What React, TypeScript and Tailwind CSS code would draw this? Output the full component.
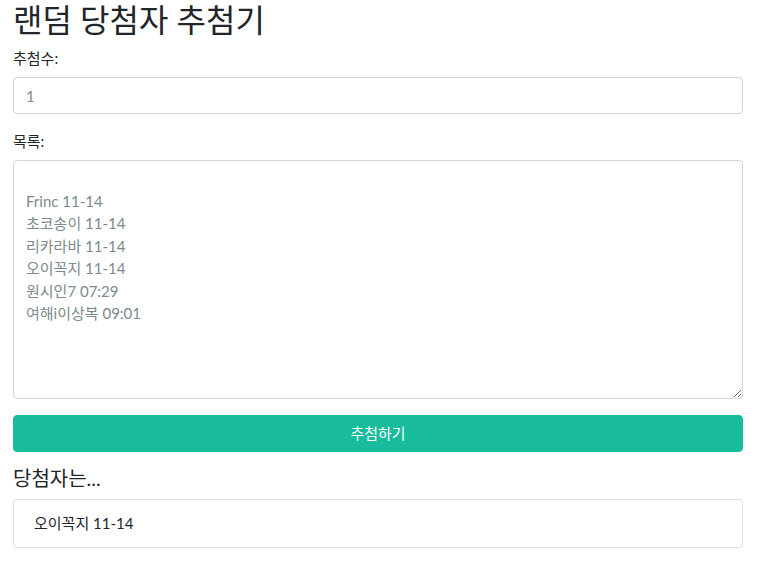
import { useState } from 'react';

const initialList = `
Frinc 11-14
초코송이 11-14
리카라바 11-14
오이꼭지 11-14
원시인7 07:29
여해i이상복 09:01`;

const font = 'font-[Lato,"Noto_Sans_CJK_KR",sans-serif]';

export default function App() {
  const [count, setCount] = useState('1');
  const [list, setList] = useState(initialList);
  const [winners, setWinners] = useState<string[]>(['오이꼭지 11-14']);

  const draw = () => {
    const names = list.split('\n').map((s) => s.trim()).filter(Boolean);
    const n = Math.max(1, parseInt(count) || 1);
    const shuffled = [...names].sort(() => Math.random() - 0.5);
    setWinners(shuffled.slice(0, n));
  };

  return (
    <div className={`${font} bg-white min-h-[570px] text-[#212529]`}>
      <div className="w-[730px] ml-[13px]">
        <h1 className="text-[32px] leading-[39px] font-normal m-0 mb-2">랜덤 당첨자 추첨기</h1>

        <div className="mb-4">
          <label className="block text-[15px] leading-[22px] mb-2">추첨수:</label>
          <input
            type="text"
            value={count}
            onChange={(e) => setCount(e.target.value)}
            className="block w-full h-[37px] px-3 text-[15px] text-[#7b8a8b] border border-[#ced4da] rounded-[4px] outline-none"
          />
        </div>

        <div className="mb-4">
          <label className="block text-[15px] leading-[22px] mb-2">목록:</label>
          <textarea
            value={list}
            onChange={(e) => setList(e.target.value)}
            className="block w-full h-[239px] px-3 py-[6px] text-[15px] leading-[22.5px] text-[#7b8a8b] border border-[#ced4da] rounded-[4px] outline-none"
          />
        </div>

        <button
          onClick={draw}
          className="block w-full h-[37px] bg-[#18bc9c] text-white text-[15px] rounded-[4px] border border-[#18bc9c]"
        >
          추첨하기
        </button>

        <h4 className="text-[20px] leading-[26px] font-normal mt-[13px] mb-[8px]">당첨자는...</h4>

        <ul className="border border-[#dfdfdf] rounded-[4px]">
          {winners.map((w, i) => (
            <li key={i} className="px-5 py-3 text-[15px] leading-[22.5px] text-[#212529]">
              {w}
            </li>
          ))}
        </ul>
      </div>
    </div>
  );
}
